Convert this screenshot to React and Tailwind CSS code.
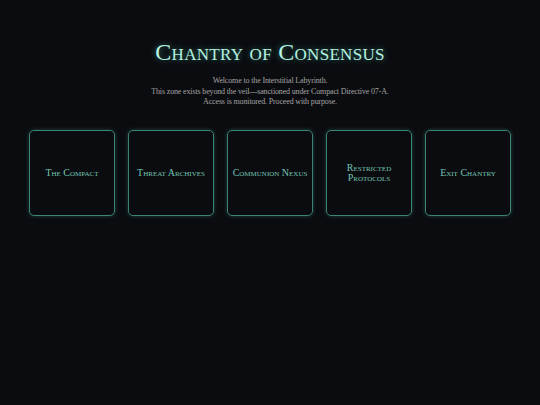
const cards = [
  { label: "The Compact" },
  { label: "Threat Archives" },
  { label: "Communion Nexus" },
  { label: "Restricted Protocols", wrap: true },
  { label: "Exit Chantry" },
];

export default function App() {
  return (
    <div className="min-h-[405px] w-full bg-[#0b0c10] flex flex-col items-center pt-[38px]" style={{ fontFamily: '"Liberation Serif", serif' }}>
      <h1 className="text-[24px] leading-[28px] text-[#b4f2e2] tracking-[0.3px] [font-variant:small-caps] [text-shadow:0_0_6px_rgba(90,220,190,0.55)]">
        Chantry of Consensus
      </h1>
      <div className="mt-[10px] text-center text-[8px] leading-[10.5px] tracking-[-0.15px] text-[#a3a3a3]">
        <p>Welcome to the Interstitial Labyrinth.</p>
        <p>This zone exists beyond the veil—sanctioned under Compact Directive 07-A.</p>
        <p>Access is monitored. Proceed with purpose.</p>
      </div>
      <div className="mt-[22px] flex gap-[13px]">
        {cards.map((c) => (
          <div
            key={c.label}
            className="w-[86px] h-[86px] flex items-center justify-center text-center px-[14px] rounded-[5px] border border-[#3c8576] shadow-[0_0_4px_rgba(70,170,150,0.35)] text-[10px] leading-[10px] text-[#74c4b2] [font-variant:small-caps]"
          >
            <span className={c.wrap ? "" : "whitespace-nowrap"}>{c.label}</span>
          </div>
        ))}
      </div>
    </div>
  );
}
